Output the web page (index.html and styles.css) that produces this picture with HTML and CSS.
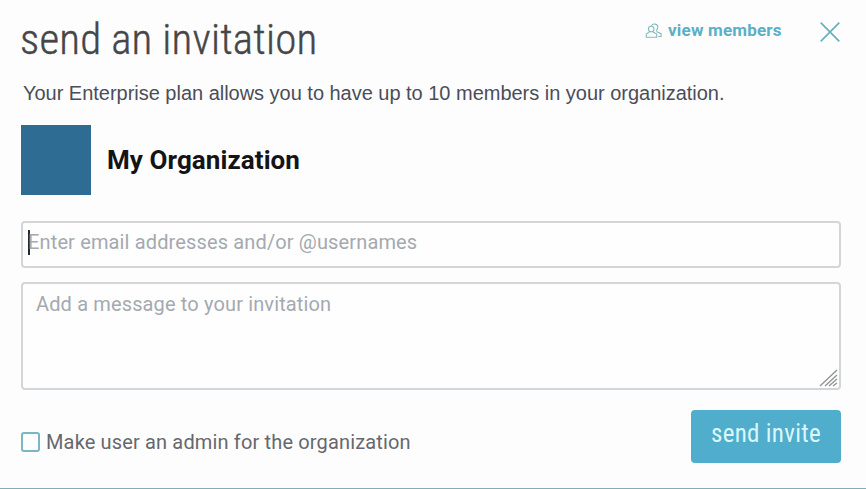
FILE: index.html
```html
<!DOCTYPE html>
<html lang="en">
<head>
<meta charset="utf-8">
<title>Send an invitation</title>
<link rel="stylesheet" href="styles.css">
</head>
<body>
<main class="dialog">
  <header class="header">
    <h1 class="title">send an invitation</h1>
    <div class="actions">
      <a class="members"><svg class="people" viewBox="0 0 18 16"><path d="M6.2 3.2a2.8 2.8 0 1 0 0 5.6 2.8 2.8 0 0 0 0-5.6zM6.5 2.6C7 1.4 8.400.9 10 1.100c2 .3 3 1.600 2.800 3.400-.1 1.300-.8 2.500-1.800 3M4.500 8.900L1.300 11v3.300h10.400V11L8 8.900M11.300 8.600l4.800 2.100v2.800h-2.800"/></svg><span class="members-label">view members</span></a>
      <svg class="close" viewBox="0 0 20 20"><path d="M.7.7l18.6 18.6M19.3.7L.7 19.3"/></svg>
    </div>
  </header>
  <p class="plan">Your Enterprise plan allows you to have up to 10 members in your organization.</p>
  <section class="org">
    <div class="avatar"></div>
    <h2 class="org-name">My Organization</h2>
  </section>
  <div class="field email"><span class="caret"></span><span class="email-text">Enter email addresses and/or @usernames</span></div>
  <div class="field message"><span class="message-text">Add a message to your invitation</span>
    <svg class="grip" viewBox="0 0 20 19"><path d="M1 17L18 1M6 17L18 6M10 17l8-7M14 17l4-3"/></svg>
  </div>
  <footer class="footer">
    <label class="admin"><span class="box"></span><span class="admin-text">Make user an admin for the organization</span></label>
    <button class="send">send invite</button>
  </footer>
</main>
</body>
</html>
```

FILE: styles.css
```css
* { box-sizing: border-box; }
body { margin: 0; background: #fdfdfe; font-family: Roboto, "Liberation Sans", sans-serif; }
.dialog { width: 866px; height: 489px; padding: 0 25px 0 21px; border-bottom: 1px solid #82aeb9; overflow: hidden; }
.header { height: 78px; display: flex; justify-content: space-between; }
.title { margin: 12px 0 0 -1px; font-size: 43px; line-height: 54px; font-weight: 300; font-stretch: 75%; letter-spacing: .17px; color: #464648; -webkit-text-stroke: .4px #464648; white-space: nowrap; }
.actions { display: flex; align-items: flex-start; }
.members { display: flex; margin-top: 18px; color: #5bafc7; }
.people { width: 18px; height: 16px; margin: 5px 5px 0 0; fill: none; stroke: #86b9c0; stroke-width: 1.1; }
.members-label { width: 114px; font-size: 17px; line-height: 25px; font-weight: 700; letter-spacing: .2px; white-space: nowrap; }
.close { width: 20px; height: 20px; margin: 22px 1px 0 38px; fill: none; stroke: #69b0bd; stroke-width: 1.7; }
.plan { margin: 0; height: 47px; padding-left: 2px; font: 20px/30px "Liberation Sans", sans-serif; letter-spacing: -.02px; color: #4b4d59; white-space: nowrap; }
.org { height: 70px; display: flex; align-items: center; }
.avatar { width: 70px; height: 70px; background: #2f6c93; }
.org-name { margin: 0 0 0 16px; font-size: 26px; line-height: 32px; font-weight: 700; letter-spacing: .08px; color: #141416; white-space: nowrap; }
.field { display: flex; border: 2px solid #d3d6d8; border-radius: 4px; color: #a4a9b0; font-size: 20px; background: #fefefe; white-space: nowrap; }
.email { height: 47px; margin-top: 26px; padding: 7px 5px; }
.caret { width: 2px; height: 25px; background: #27292d; margin-right: -2px; }
.email-text { line-height: 24px; letter-spacing: .14px; }
.message { position: relative; height: 108px; margin-top: 14px; padding: 8px 13px; }
.message-text { line-height: 25px; letter-spacing: .14px; }
.grip { position: absolute; right: 0; bottom: 0; width: 20px; height: 19px; fill: none; stroke: #929596; stroke-width: 1.4; }
.footer { display: flex; justify-content: space-between; margin-top: 20px; }
.admin { display: flex; align-items: center; height: 26px; margin-top: 19px; font-size: 20px; letter-spacing: .15px; color: #66686d; white-space: nowrap; }
.box { width: 19px; height: 20px; border: 2px solid #78b7c3; border-radius: 3px; margin-right: 6px; }
.send { width: 150px; height: 53px; padding: 0 0 5px; border: 0; border-radius: 4px; background: #50adcc; color: #d9f8fb; font: 400 25px/30px Roboto, sans-serif; font-stretch: 75%; letter-spacing: .3px; white-space: nowrap; }
```
